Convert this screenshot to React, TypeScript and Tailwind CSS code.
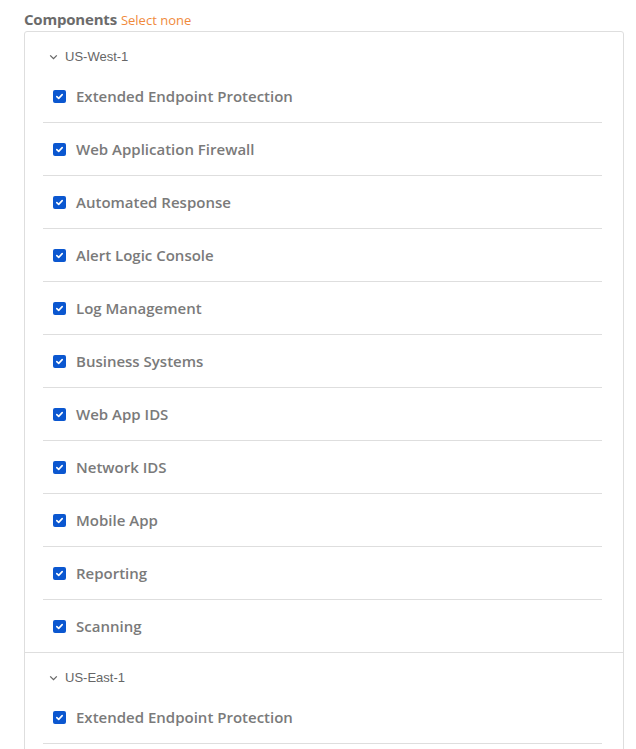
import React from 'react';

const components = [
  'Extended Endpoint Protection',
  'Web Application Firewall',
  'Automated Response',
  'Alert Logic Console',
  'Log Management',
  'Business Systems',
  'Web App IDS',
  'Network IDS',
  'Mobile App',
  'Reporting',
  'Scanning',
];

// only the part of the second region that fits the view
const regions = [
  { name: 'US-West-1', items: components, last: false },
  { name: 'US-East-1', items: components.slice(0, 1), last: true },
];

const Chevron = () => (
  <svg width="9" height="6" viewBox="0 0 9 6" className="shrink-0">
    <path d="M1.2 1.4 L4.5 4.6 L7.8 1.4" fill="none" stroke="#666" strokeWidth="1.3" />
  </svg>
);

const CheckBox = () => (
  <span className="w-[13px] h-[13px] rounded-[2px] bg-[#0b57d0] flex items-center justify-center shrink-0">
    <svg width="9" height="9" viewBox="0 0 9 9">
      <path d="M1.8 4.6 L3.7 6.4 L7.2 2.6" fill="none" stroke="#fff" strokeWidth="1.6" strokeLinecap="round" strokeLinejoin="round" />
    </svg>
  </span>
);

const RegionGroup: React.FC<{ name: string; items: string[]; last: boolean }> = ({ name, items, last }) => (
  <div className={`pt-[17px] ${last ? '' : 'border-b border-[#dedede]'}`}>
    <div className="flex items-center gap-[7px] pl-[24px] h-[16px] text-[13px] leading-[16px] text-[#666] font-['Liberation_Sans',sans-serif]">
      <Chevron />
      <span>{name}</span>
    </div>
    <ul className="mt-[5px] ml-[18px] mr-[21px]">
      {items.map((c, i) => (
        <li
          key={c}
          className={`flex items-center gap-[10px] pl-[10px] ${i < items.length - 1 || last ? 'border-b border-[#dedede] h-[53px]' : 'h-[52px]'}`}
        >
          <CheckBox />
          <span className="text-[15px] font-semibold text-[#7a7a7a] font-['Open_Sans',sans-serif]">{c}</span>
        </li>
      ))}
    </ul>
  </div>
);

export default function App() {
  return (
    <div className="bg-white h-[749px] overflow-hidden pl-[24px] pr-[12px] pt-[9px]">
      <div className="flex items-baseline gap-[4px] h-[20px] leading-[20px] mb-[2px]">
        <span className="text-[15px] font-bold text-[#6b6b6b] tracking-[-0.2px] font-['Open_Sans',sans-serif]">Components</span>
        <span className="text-[13px] text-[#f08a3c] font-['Open_Sans',sans-serif] cursor-pointer">Select none</span>
      </div>
      <div className="w-[600px] h-[740px] border border-[#dedede] rounded-[3px]">
        {regions.map(r => (
          <RegionGroup key={r.name} name={r.name} items={r.items} last={r.last} />
        ))}
      </div>
    </div>
  );
}
